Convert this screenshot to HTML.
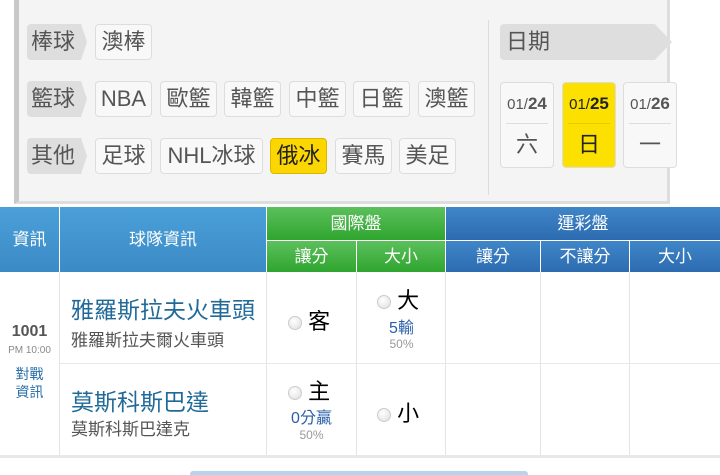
<!DOCTYPE html>
<html><head><meta charset="utf-8"><style>
*{margin:0;padding:0;box-sizing:border-box}
body{width:720px;height:474px;background:#fff;position:relative;overflow:hidden;font-family:"Liberation Sans","Noto Sans CJK TC",sans-serif}
.panel{position:absolute;left:14px;top:-2px;width:656px;height:206px;background:#f4f4f4;border-left:5px solid #c8c8c8;border-right:3px solid #ddd;border-bottom:3px solid #ddd}
.lab{position:absolute;height:36px;background:#dedede;color:#555;font-size:22px;line-height:36px;padding-left:4px;clip-path:polygon(0 0,90% 0,100% 50%,90% 100%,0 100%);border-radius:4px 0 0 4px}
.tag{position:absolute;height:36px;background:#f8f8f8;border:1px solid #ddd;border-radius:4px;color:#555;font-size:22px;line-height:34px;text-align:center}
.sel{background:#fbd600;border-color:#d9b800;color:#222}
.date{position:absolute;top:82px;width:54px;height:86px;background:#f8f8f8;border:1px solid #ddd;border-radius:4px;text-align:center;color:#555}
.date .d{font-size:15px;height:40px;line-height:42px}
.date .d b{font-size:17px}
.date .w{border-top:1px solid #ddd;margin:0 5px;font-size:22px;line-height:42px}
.h{position:absolute;color:#fff;text-align:center;font-size:17px}
.bl{background:linear-gradient(#4ba0d8,#3b8ac6)}
.gr{background:linear-gradient(#5cc05c,#2fa52f)}
.db{background:linear-gradient(#3f86c8,#2d6bb0)}
.v{position:absolute;top:272px;height:183px;width:1px;background:#e4e4e4}
.radio{display:inline-block;width:14px;height:14px;border-radius:50%;background:radial-gradient(circle at 40% 35%,#fff,#ddd);border:1px solid #ccc;vertical-align:middle}
.t{position:absolute}
</style></head><body>
<div class="panel"></div>
<div class="lab" style="left:27px;top:24px;width:60px">棒球</div>
<div class="tag" style="left:95px;top:24px;width:57px">澳棒</div>
<div class="lab" style="left:27px;top:81px;width:60px">籃球</div>
<div class="tag" style="left:95px;top:81px;width:57px">NBA</div>
<div class="tag" style="left:160px;top:81px;width:57px">歐籃</div>
<div class="tag" style="left:224px;top:81px;width:57px">韓籃</div>
<div class="tag" style="left:289px;top:81px;width:57px">中籃</div>
<div class="tag" style="left:353px;top:81px;width:57px">日籃</div>
<div class="tag" style="left:418px;top:81px;width:57px">澳籃</div>
<div class="lab" style="left:27px;top:138px;width:60px">其他</div>
<div class="tag" style="left:95px;top:138px;width:57px">足球</div>
<div class="tag" style="left:160px;top:138px;width:103px">NHL冰球</div>
<div class="tag sel" style="left:270px;top:138px;width:57px">俄冰</div>
<div class="tag" style="left:335px;top:138px;width:57px">賽馬</div>
<div class="tag" style="left:399px;top:138px;width:57px">美足</div>
<div style="position:absolute;left:488px;top:20px;width:1px;height:175px;background:#ddd"></div>
<div class="lab" style="left:500px;top:24px;width:172px;padding-left:6px">日期</div>
<div class="date" style="left:500px">
<div class="d">01/<b>24</b></div><div class="w">六</div></div>
<div class="date sel" style="left:562px;background:#fbe000"><div class="d" style="color:#222">01/<b>25</b></div><div class="w" style="border-color:#e8c800;color:#222">日</div></div>
<div class="date" style="left:623px"><div class="d">01/<b>26</b></div><div class="w">一</div></div>

<div class="h bl" style="left:0;top:207px;width:59px;height:65px;line-height:65px">資訊</div>
<div class="h bl" style="left:60px;top:207px;width:206px;height:65px;line-height:65px">球隊資訊</div>
<div class="h gr" style="left:267px;top:207px;width:178px;height:33px;line-height:33px">國際盤</div>
<div class="h gr" style="left:267px;top:241px;width:89px;height:31px;line-height:31px">讓分</div>
<div class="h gr" style="left:357px;top:241px;width:88px;height:31px;line-height:31px">大小</div>
<div class="h db" style="left:446px;top:207px;width:274px;height:33px;line-height:33px">運彩盤</div>
<div class="h db" style="left:446px;top:241px;width:94px;height:31px;line-height:31px">讓分</div>
<div class="h db" style="left:541px;top:241px;width:88px;height:31px;line-height:31px">不讓分</div>
<div class="h db" style="left:630px;top:241px;width:90px;height:31px;line-height:31px">大小</div>

<div class="v" style="left:59px"></div><div class="v" style="left:266px"></div><div class="v" style="left:356px"></div><div class="v" style="left:445px"></div><div class="v" style="left:540px"></div><div class="v" style="left:629px"></div>
<div style="position:absolute;left:60px;top:363px;width:660px;height:1px;background:#e8e8e8"></div>
<div style="position:absolute;left:0;top:455px;width:720px;height:3px;background:#e8e8e8"></div>

<div class="t" style="left:0;width:59px;top:323px;text-align:center;font-weight:bold;color:#555;font-size:16px">1001</div>
<div class="t" style="left:0;width:59px;top:345px;text-align:center;color:#888;font-size:10px">PM 10:00</div>
<div class="t" style="left:0;width:59px;top:365px;text-align:center;color:#2a6fa8;font-size:14px;line-height:18px">對戰<br>資訊</div>
<div class="t" style="left:71px;top:291px;color:#1f6a98;font-size:23px">雅羅斯拉夫火車頭</div>
<div class="t" style="left:71px;top:326px;color:#555;font-size:17px">雅羅斯拉夫爾火車頭</div>
<div class="t" style="left:71px;top:383px;color:#1f6a98;font-size:23px">莫斯科斯巴達</div>
<div class="t" style="left:71px;top:415px;color:#555;font-size:17px">莫斯科斯巴達克</div>

<div class="t" style="left:288px;top:304px;font-size:22px"><span class="radio"></span> 客</div>
<div class="t" style="left:377px;top:283px;font-size:22px"><span class="radio"></span> 大</div>
<div class="t" style="left:357px;width:89px;top:314px;text-align:center;color:#2a5fa8;font-size:16px">5輸</div>
<div class="t" style="left:357px;width:89px;top:337px;text-align:center;color:#999;font-size:12px">50%</div>
<div class="t" style="left:288px;top:374px;font-size:22px"><span class="radio"></span> 主</div>
<div class="t" style="left:267px;width:89px;top:404px;text-align:center;color:#2a5fa8;font-size:16px">0分贏</div>
<div class="t" style="left:267px;width:89px;top:428px;text-align:center;color:#999;font-size:12px">50%</div>
<div class="t" style="left:377px;top:396px;font-size:22px"><span class="radio"></span> 小</div>

<div style="position:absolute;left:190px;top:471px;width:338px;height:4px;background:#b8d4ea;border-radius:3px 3px 0 0"></div>
</body></html>
